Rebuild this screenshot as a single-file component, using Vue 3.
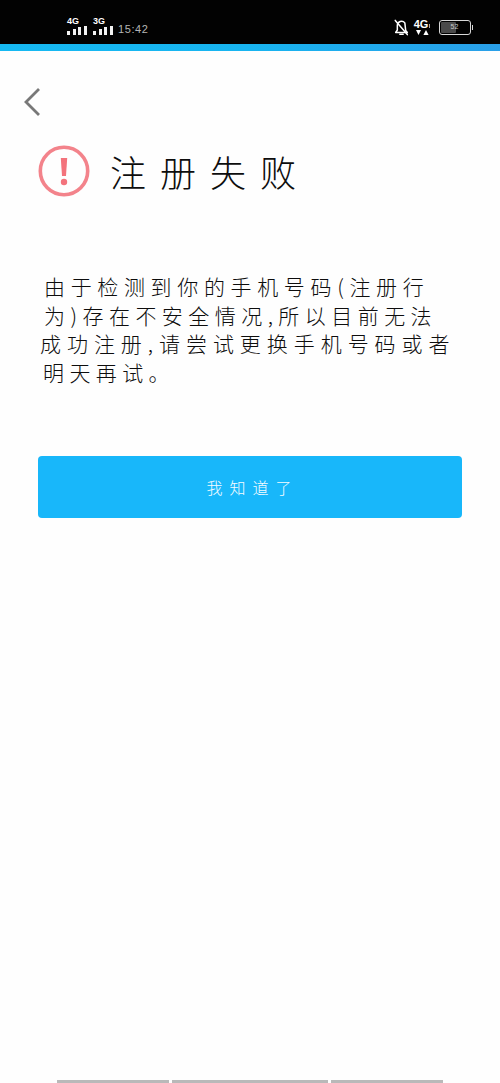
<script setup>
const lines = [
  '由于检测到你的手机号码(注册行',
  '为)存在不安全情况,所以目前无法',
  '成功注册,请尝试更换手机号码或者',
  '明天再试。'
]
const signalBars = [1, 2, 3, 4]
</script>

<template>
  <div class="page">
    <header class="status">
      <div class="status-left">
        <div v-for="net in ['4G', '3G']" :key="net" class="net">
          <span class="net-label">{{ net }}</span>
          <span class="bars">
            <i v-for="b in signalBars" :key="b" class="bar"></i>
          </span>
        </div>
        <span class="time">15:42</span>
      </div>
      <div class="status-right">
        <svg class="bell" width="15" height="17" viewBox="0 0 18 20" fill="none" stroke="#fff" stroke-width="1.8" stroke-linejoin="round" stroke-linecap="round">
          <path d="M4 7.500a5 5 0 0 1 9-3l1 9 2 2.500H2l2-3z" />
          <path d="M7 18.200h4" />
          <path d="M1.500 1.500 16 18.500" />
        </svg>
        <div class="data">
          <span class="data-label">4G<i class="data-tick"></i></span>
          <svg width="14" height="6" viewBox="0 0 14 6" fill="#fff"><path d="M1 0h5L3.500 5zM11 0l2.600 5H8.400z" /></svg>
        </div>
        <div class="battery">
          <div class="battery-body">
            <div class="battery-fill"></div>
            <span class="battery-text">52</span>
          </div>
          <i class="battery-cap"></i>
        </div>
      </div>
    </header>
    <div class="strip"></div>

    <main class="content">
      <svg class="back" width="18" height="30" viewBox="0 0 18 30" fill="none" stroke="#787878" stroke-width="2.800">
        <path d="M16 2 3 15l13 13" />
      </svg>

      <div class="title-row">
        <svg width="52" height="52" viewBox="0 0 52 52">
          <circle cx="26" cy="26" r="23.700" fill="none" stroke="#f3838b" stroke-width="3.600" />
          <path d="M22.800 13h6.400l-1.200 18h-4z" fill="#f3737c" />
          <circle cx="26" cy="37" r="3.200" fill="#f3737c" />
        </svg>
        <h1 class="title">注册失败</h1>
      </div>

      <div class="message">
        <p v-for="(line, i) in lines" :key="i" class="line" :class="'line-' + i">{{ line }}</p>
      </div>

      <button class="confirm">我知道了</button>
    </main>

    <footer class="nav">
      <i class="nav-a"></i>
      <i class="nav-b"></i>
      <i class="nav-a"></i>
    </footer>
  </div>
</template>

<style scoped>
.page {
  width: 500px;
  height: 1083px;
  display: flex;
  flex-direction: column;
  background: #fefefe;
  font-family: "Noto Sans CJK SC", "Noto Sans", sans-serif;
  color: #0d0d0d;
  overflow: hidden;
}
.status {
  height: 44px;
  flex: none;
  background: #020202;
  display: flex;
  justify-content: space-between;
  align-items: center;
  padding: 0 27px 0 67px;
  box-sizing: border-box;
  color: #fff;
}
.status-left {
  display: flex;
  align-items: flex-end;
  gap: 6px;
  height: 18px;
  margin-top: 8px;
}
.net {
  display: flex;
  flex-direction: column;
  width: 20px;
}
.net-label {
  font-family: "Liberation Sans", sans-serif;
  font-weight: 700;
  font-size: 9px;
  line-height: 9px;
}
.bars {
  display: flex;
  align-items: flex-end;
  gap: 2.600px;
  height: 9px;
}
.bar {
  width: 3px;
  background: #f2f2f2;
}
.bar:nth-child(1) { height: 4px; }
.bar:nth-child(2) { height: 6px; }
.bar:nth-child(3) { height: 8px; }
.bar:nth-child(4) { height: 9px; }
.time {
  font-family: "Liberation Sans", sans-serif;
  font-size: 11px;
  line-height: 12px;
  letter-spacing: 0.600px;
  color: #b5b5b5;
  margin-left: -1px;
}
.status-right {
  display: flex;
  align-items: center;
  gap: 5px;
  margin-top: 10px;
}
.data {
  display: flex;
  flex-direction: column;
  align-items: center;
  width: 17px;
  margin-right: 3px;
}
.data-label {
  font-family: "Liberation Sans", sans-serif;
  font-weight: 700;
  font-size: 11px;
  line-height: 11px;
  display: flex;
  align-items: flex-end;
  gap: 1px;
}
.data-tick {
  width: 1px;
  height: 4px;
  background: #aaa;
  margin-bottom: 2px;
}
.battery {
  display: flex;
  align-items: center;
  gap: 1px;
}
.battery-body {
  width: 30px;
  height: 13px;
  border: 1.200px solid #d8d8d8;
  border-radius: 3px;
  position: relative;
  display: flex;
  align-items: center;
  justify-content: center;
}
.battery-fill {
  position: absolute;
  left: 1px;
  top: 1px;
  bottom: 1px;
  width: 52%;
  background: #4a4a4a;
  border-radius: 1px;
}
.battery-text {
  position: relative;
  font-family: "Liberation Sans", sans-serif;
  font-size: 7px;
  line-height: 8px;
  color: #c8c8c8;
}
.battery-cap {
  width: 1.500px;
  height: 5px;
  background: #d8d8d8;
}
.strip {
  height: 7px;
  flex: none;
  background: linear-gradient(90deg, #16b9f2 0%, #18b4f0 50%, #2a9fe8 100%);
}
.content {
  flex: 1;
  display: flex;
  flex-direction: column;
  padding: 36px 38px 0;
  box-sizing: border-box;
}
.back {
  margin-left: -15px;
  flex: none;
}
.title-row {
  display: flex;
  align-items: center;
  margin-top: 28px;
}
.title {
  margin: 0 0 0 20px;
  font-size: 36px;
  line-height: 52px;
  font-weight: 300;
  letter-spacing: 14px;
  white-space: nowrap;
}
.message {
  margin-top: 75px;
}
.line {
  margin: 0;
  height: 28.500px;
  font-size: 21px;
  line-height: 28.500px;
  font-weight: 300;
  letter-spacing: 5.650px;
  white-space: nowrap;
  padding-left: 6px;
}
.line-1 {
  letter-spacing: 5.450px;
}
.line-2 {
  letter-spacing: 5.950px;
  padding-left: 2px;
}
.line-3 {
  letter-spacing: 5.400px;
  padding-left: 5px;
}
.confirm {
  margin-top: 70px;
  height: 62px;
  width: 424px;
  flex: none;
  border: none;
  border-radius: 4px;
  background: #18b7fa;
  color: #f4fbff;
  font-family: inherit;
  font-size: 16px;
  font-weight: 300;
  letter-spacing: 7px;
  text-indent: 5px;
}
.nav {
  flex: none;
  height: 3px;
  display: flex;
  justify-content: center;
  gap: 3px;
}
.nav i {
  background: #b9b9b9;
}
.nav-a {
  width: 112px;
}
.nav-b {
  width: 156px;
}
</style>
